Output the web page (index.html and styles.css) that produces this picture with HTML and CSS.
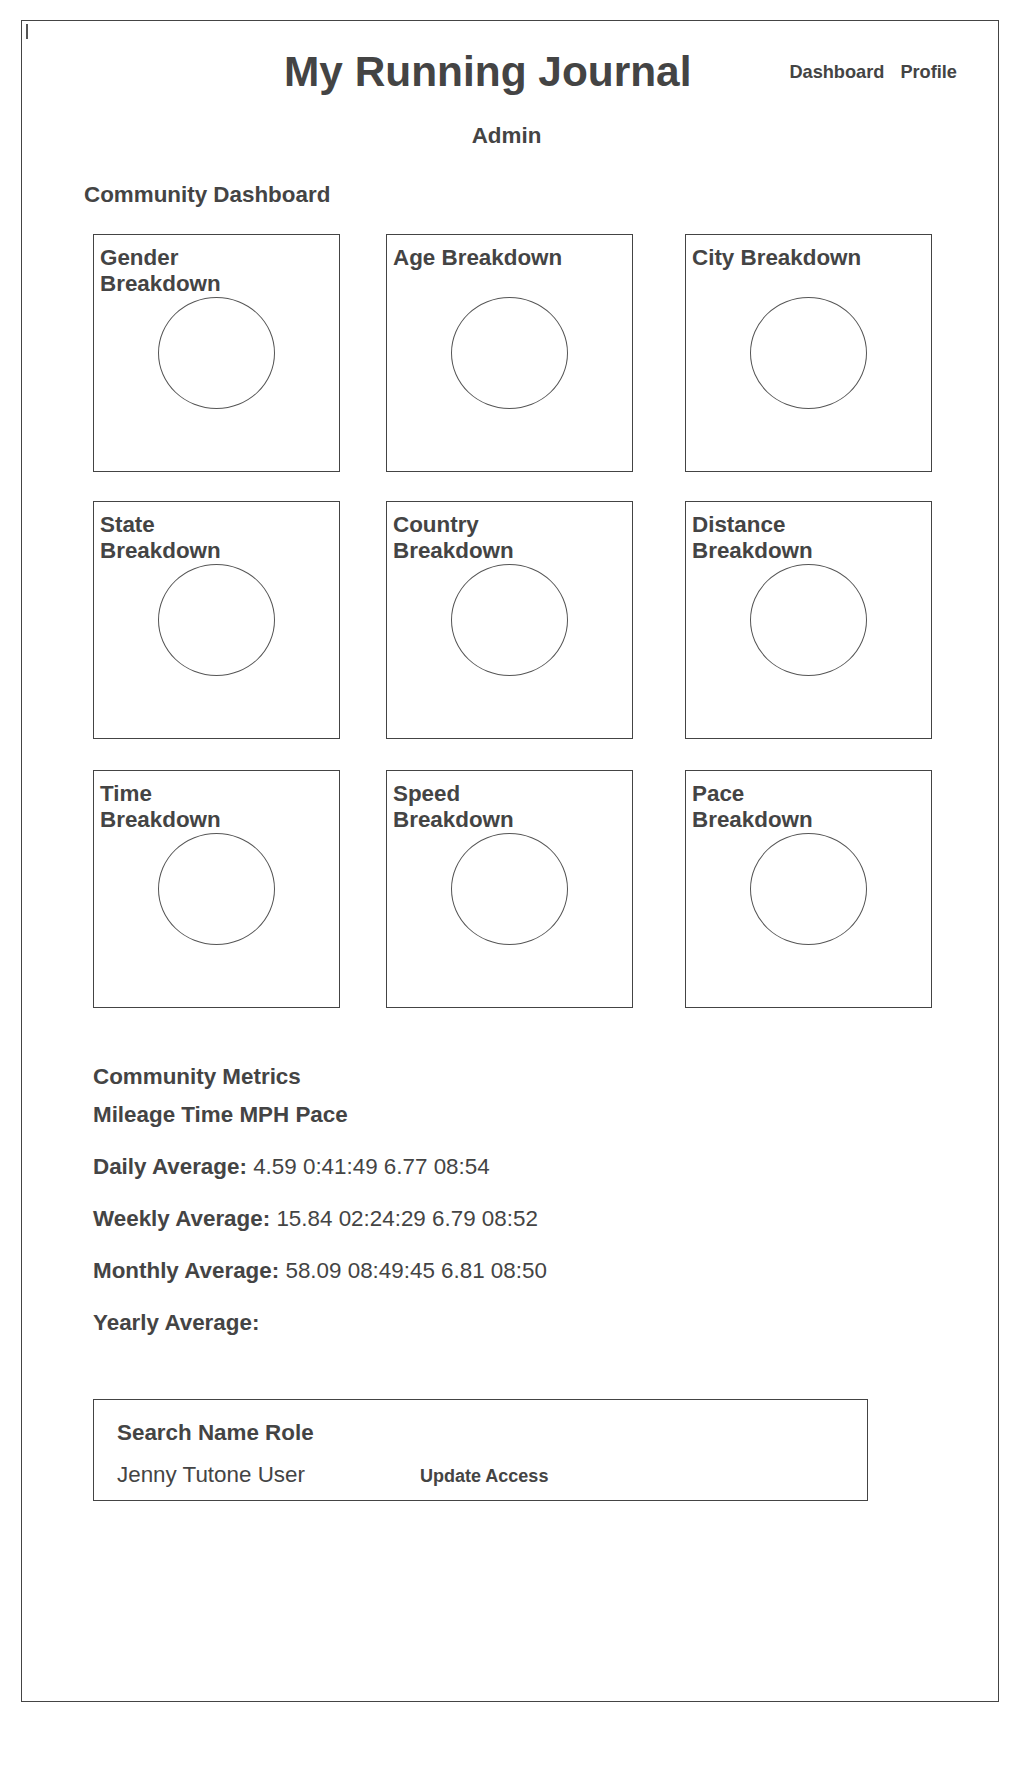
FILE: index.html
```html
<!DOCTYPE html>
<html>

<head>
    <title>My Running Journal - Admin</title>
    <link rel="stylesheet" href="styles.css">
</head>

<body>
    <div class="page">
        <span class="caret"></span>

        <header class="top-bar">
            <h1>My Running Journal</h1>
            <nav class="nav-links">
                <a href="#">Dashboard</a>
                <a href="#">Profile</a>
            </nav>
        </header>

        <h2 class="role">Admin</h2>

        <h2 class="section-title">Community Dashboard</h2>

        <div class="chart-grid">
            <div class="chart-card">
                <h3>Gender Breakdown</h3>
                <div class="chart-circle"></div>
            </div>
            <div class="chart-card">
                <h3>Age Breakdown</h3>
                <div class="chart-circle"></div>
            </div>
            <div class="chart-card">
                <h3>City Breakdown</h3>
                <div class="chart-circle"></div>
            </div>
            <div class="chart-card">
                <h3>State Breakdown</h3>
                <div class="chart-circle"></div>
            </div>
            <div class="chart-card">
                <h3>Country Breakdown</h3>
                <div class="chart-circle"></div>
            </div>
            <div class="chart-card">
                <h3>Distance Breakdown</h3>
                <div class="chart-circle"></div>
            </div>
            <div class="chart-card last-row">
                <h3>Time Breakdown</h3>
                <div class="chart-circle"></div>
            </div>
            <div class="chart-card last-row">
                <h3>Speed Breakdown</h3>
                <div class="chart-circle"></div>
            </div>
            <div class="chart-card last-row">
                <h3>Pace Breakdown</h3>
                <div class="chart-circle"></div>
            </div>
        </div>

        <div class="metrics">
            <h3>Community Metrics</h3>
            <p class="metrics-head">Mileage Time MPH Pace</p>
            <p><strong>Daily Average:</strong> 4.59 0:41:49 6.77 08:54</p>
            <p><strong>Weekly Average:</strong> 15.84 02:24:29 6.79 08:52</p>
            <p><strong>Monthly Average:</strong> 58.09 08:49:45 6.81 08:50</p>
            <p><strong>Yearly Average:</strong></p>
        </div>

        <div class="user-search">
            <h3>Search Name Role</h3>
            <div class="user-row">
                <span class="user-name">Jenny Tutone User</span>
                <button type="button" class="update-btn">Update Access</button>
            </div>
        </div>
    </div>
</body>

</html>
```

FILE: styles.css
```css
body {
    margin: 0;
    font-family: "Liberation Sans", Arial, sans-serif;
    color: #444;
    background-color: #fff;
}

.page {
    margin: 20px 20px 0 21px;
    height: 1682px;
    border: 1px solid #444;
    box-sizing: border-box;
}

.caret {
    display: block;
    width: 2px;
    height: 15px;
    margin: 3px 0 0 4px;
    background-color: #555;
}

.top-bar {
    display: flex;
    align-items: center;
    margin-top: 9px;
    padding: 0 41px 0 262px;
}

h1 {
    margin: 0;
    font-size: 42.4px;
}

.nav-links {
    display: flex;
    gap: 16px;
    margin-left: auto;
}

.nav-links a {
    color: #444;
    text-decoration: none;
    font-size: 18.2px;
    font-weight: bold;
}

.role {
    margin: 27px 0 0;
    padding-right: 7px;
    font-size: 22.4px;
    text-align: center;
}

.section-title {
    margin: 33px 0 0 62px;
    font-size: 22.4px;
}

.chart-grid {
    display: grid;
    grid-template-columns: 293px 299px 248px;
    row-gap: 29px;
    margin: 26px 0 0 71px;
}

.chart-card {
    width: 247px;
    height: 238px;
    padding: 10px 6px 0;
    border: 1px solid #444;
    box-sizing: border-box;
}

.chart-card.last-row {
    margin-top: 2px;
}

.chart-card h3 {
    width: 172px;
    height: 52px;
    margin: 0;
    font-size: 22.4px;
    line-height: 25.5px;
}

.chart-circle {
    width: 117px;
    height: 112px;
    margin: 0 auto;
    border: 1px solid #555;
    border-radius: 50%;
    box-sizing: border-box;
}

.metrics {
    margin: 56px 0 0 71px;
}

.metrics h3 {
    margin: 0 0 11.5px;
    font-size: 22.4px;
    line-height: 26px;
}

.metrics p {
    margin: 0 0 26px;
    font-size: 22.4px;
    line-height: 26px;
}

.metrics p:last-child {
    margin-bottom: 0;
}

.metrics-head {
    font-weight: bold;
}

.user-search {
    width: 775px;
    margin: 63px 0 0 71px;
    padding: 20px 23px 12px;
    border: 1px solid #444;
    box-sizing: border-box;
}

.user-search h3 {
    margin: 0 0 16px;
    font-size: 22.4px;
}

.user-row {
    display: grid;
    grid-template-columns: 303px auto;
    align-items: baseline;
}

.user-name {
    font-size: 22.4px;
}

.update-btn {
    justify-self: start;
    padding: 0;
    border: none;
    background: none;
    color: #444;
    font-family: "Liberation Sans", Arial, sans-serif;
    font-size: 18px;
    font-weight: bold;
    cursor: pointer;
}
```
